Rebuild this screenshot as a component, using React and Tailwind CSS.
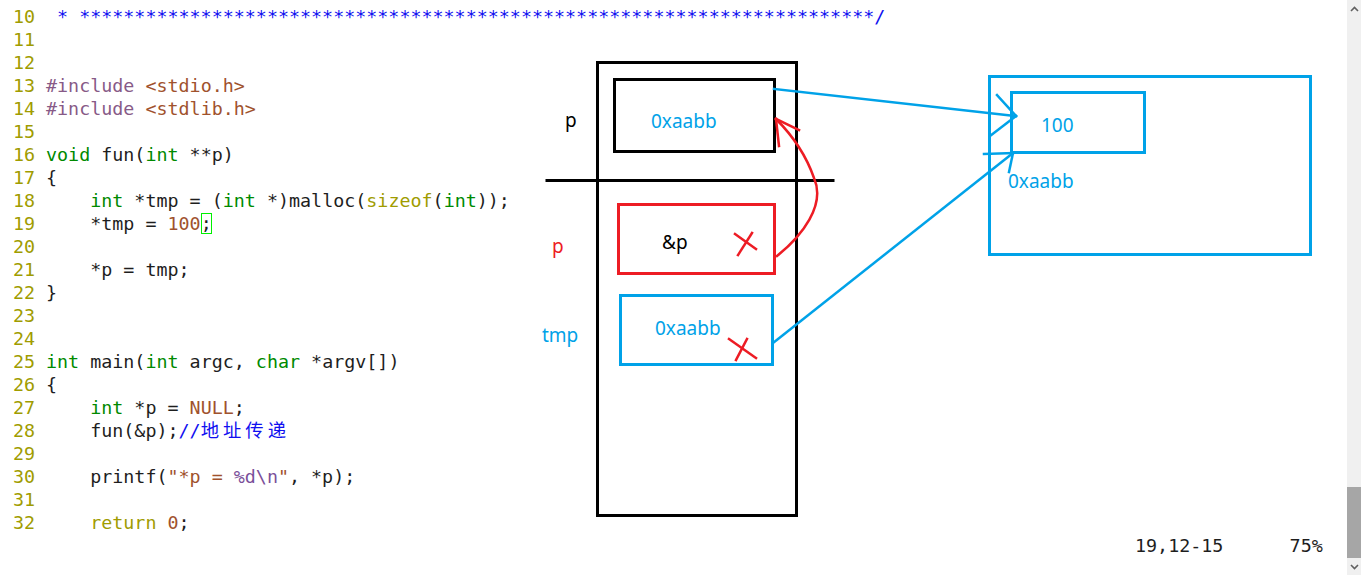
import React from "react";

const C = {
  num: "text-[#a09c00]",
  pre: "text-[#875a87]",
  str: "text-[#a0522d]",
  type: "text-[#008a00]",
  stmt: "text-[#a09c00]",
  sp: "text-[#7a4f9a]",
  com: "text-[#1010f0]",
};

const stars = "*".repeat(72);

// each line: [lineNo, [[text, cls], ...]]
const lines = [
  [10, [[" * " + stars + "/", C.com]]],
  [11, []],
  [12, []],
  [13, [["#include ", C.pre], ["<stdio.h>", C.str]]],
  [14, [["#include ", C.pre], ["<stdlib.h>", C.str]]],
  [15, []],
  [16, [["void", C.type], [" fun("], ["int", C.type], [" **p)"]]],
  [17, [["{"]]],
  [18, [["    "], ["int", C.type], [" *tmp = ("], ["int", C.type], [" *)malloc("], ["sizeof", C.stmt], ["("], ["int", C.type], ["));"]]],
  [19, [["    *tmp = "], ["100", C.str], ["cursor"]]],
  [20, []],
  [21, [["    *p = tmp;"]]],
  [22, [["}"]]],
  [23, []],
  [24, []],
  [25, [["int", C.type], [" main("], ["int", C.type], [" argc, "], ["char", C.type], [" *argv[])"]]],
  [26, [["{"]]],
  [27, [["    "], ["int", C.type], [" *p = "], ["NULL", C.str], [";"]]],
  [28, [["    fun(&p);"], ["//", C.com], ["地址传递", C.com + " tracking-[4px]"]]],
  [29, []],
  [30, [["    printf("], ["\"*p = ", C.str], ["%d\\n", C.sp], ["\"", C.str], [", *p);"]]],
  [31, []],
  [32, [["    "], ["return", C.stmt], [" "], ["0", C.str], [";"]]],
];

const mono = "font-['DejaVu_Sans_Mono','Noto_Sans_CJK_SC',monospace] text-[18.35px] leading-[23px]";
const label = "absolute font-['Noto_Sans',sans-serif] text-[19px] leading-[19px] whitespace-pre";

const CodeLine = ({ n, parts }) => (
  <div className="flex h-[23px] whitespace-pre">
    <span className={`${C.num} w-[44px] text-right pr-[11px]`}>{n}</span>
    <span className="text-[#1e1e1e]">
      {parts.map(([t, cls], i) =>
        t === "cursor" ? (
          <span key={i} className="outline outline-1 outline-[#00f000] -outline-offset-1">;</span>
        ) : (
          <span key={i} className={cls}>{t}</span>
        )
      )}
    </span>
  </div>
);

const Diagram = () => (
  <div className="absolute inset-0 pointer-events-none">
    {/* stack frame */}
    <div className="absolute left-[596px] top-[61px] w-[202px] h-[456px] border-[3px] border-black" />
    <div className="absolute left-[613px] top-[78px] w-[163px] h-[75px] border-[3px] border-black" />
    <div className="absolute left-[617px] top-[203px] w-[159px] h-[72px] border-[3px] border-[#ed1c24]" />
    <div className="absolute left-[619px] top-[294px] w-[155px] h-[72px] border-[3px] border-[#00a2e8]" />
    {/* heap */}
    <div className="absolute left-[988px] top-[75px] w-[324px] h-[181px] border-[3px] border-[#00a2e8]" />
    <div className="absolute left-[1010px] top-[91px] w-[136px] h-[63px] border-[3px] border-[#00a2e8]" />

    <span className={`${label} left-[651px] top-[112px] text-[#00a2e8]`}>0xaabb</span>
    <span className={`${label} left-[565px] top-[111px] text-black`}>p</span>
    <span className={`${label} left-[662px] top-[233px] text-black`}>&amp;p</span>
    <span className={`${label} left-[552px] top-[237px] text-[#ed1c24]`}>p</span>
    <span className={`${label} left-[655px] top-[319px] text-[#00a2e8]`}>0xaabb</span>
    <span className={`${label} left-[542px] top-[326px] text-[#00a2e8]`}>tmp</span>
    <span className={`${label} left-[1041px] top-[116px] text-[#00a2e8]`}>100</span>
    <span className={`${label} left-[1008px] top-[172px] text-[#00a2e8]`}>0xaabb</span>

    <svg className="absolute left-0 top-0" width="1347" height="575" fill="none" strokeLinecap="square">
      <line x1="547" y1="180.5" x2="833" y2="180.5" stroke="#000" strokeWidth="3" />
      {/* blue pointers */}
      <g stroke="#00a2e8" strokeWidth="2.5">
        <line x1="774" y1="89" x2="1016" y2="116" />
        <line x1="997" y1="95" x2="1016" y2="116" />
        <line x1="990" y1="136" x2="1016" y2="116" />
        <line x1="773" y1="343" x2="1013" y2="153" />
        <line x1="984" y1="154" x2="1013" y2="153" />
        <line x1="1013" y1="153" x2="1009" y2="172" />
      </g>
      {/* red arrow &p and crosses */}
      <g stroke="#ed1c24" strokeWidth="2.5">
        <path d="M777 256 C 802 236, 826 205, 814 178 C 806 155, 792 135, 776 119" />
        <line x1="776" y1="119" x2="799" y2="130" />
        <line x1="776" y1="119" x2="779" y2="146" />
        <line x1="735" y1="234" x2="756" y2="249" />
        <line x1="752" y1="233" x2="738" y2="255" />
        <line x1="729" y1="339" x2="756" y2="358" />
        <line x1="747" y1="339" x2="736" y2="360" />
      </g>
    </svg>
  </div>
);

const Scrollbar = () => (
  <div className="w-[14px] h-full bg-[#f0f0f0] flex flex-col items-center">
    <div className="h-[17px] flex items-center justify-center">
      <svg width="9" height="6" viewBox="0 0 9 6">
        <path d="M1 5 L4.5 1.5 L8 5" stroke="#606060" strokeWidth="1.6" fill="none" />
      </svg>
    </div>
    <div className="flex-1" />
    <div className="w-full h-[71px] bg-[#a6a6a6]" />
    <div className="h-[17px] flex items-center justify-center">
      <svg width="9" height="6" viewBox="0 0 9 6">
        <path d="M1 1 L4.5 4.5 L8 1" stroke="#606060" strokeWidth="1.6" fill="none" />
      </svg>
    </div>
  </div>
);

export default function App() {
  return (
    <div className="w-[1361px] h-[575px] bg-white flex overflow-hidden">
      <div className={`relative flex-1 flex flex-col pt-[5px] pl-[2px] ${mono}`}>
        {lines.map(([n, parts]) => (
          <CodeLine key={n} n={n} parts={parts} />
        ))}
        <div className="h-[23px] whitespace-pre text-[#1e1e1e] pl-[1133px]">19,12-15      75%</div>
        <Diagram />
      </div>
      <Scrollbar />
    </div>
  );
}
